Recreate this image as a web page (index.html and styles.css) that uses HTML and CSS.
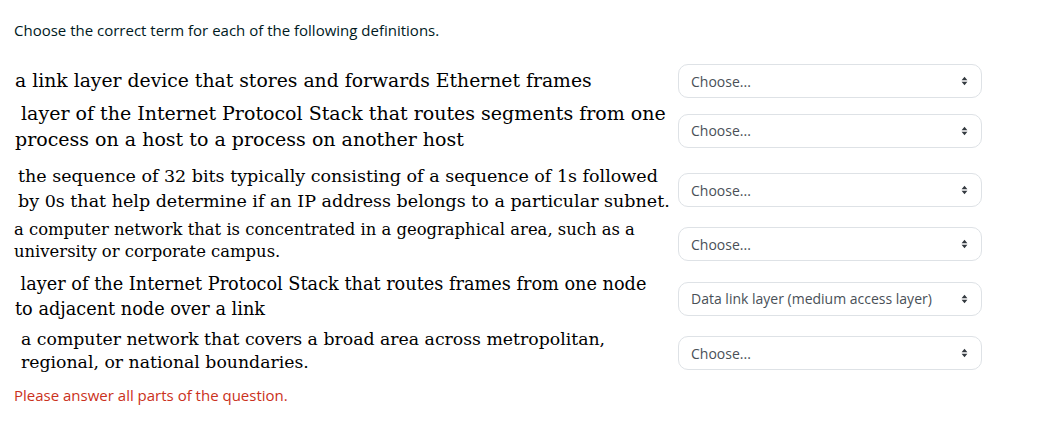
FILE: index.html
```html
<!DOCTYPE html>
<html lang="en">
<head>
    <meta charset="UTF-8">
    <meta name="viewport" content="width=device-width, initial-scale=1.0">
    <title>Match question</title>
    <link rel="stylesheet" href="styles.css">
</head>
<body>

    <div class="que">
        <div class="qtext">Choose the correct term for each of the following definitions.</div>

        <div class="answer">
            <!-- row 1 -->
            <div class="def def-1">a link layer device that stores and forwards Ethernet frames</div>
            <div class="control">
                <select class="choose">
                    <option selected>Choose...</option>
                    <option>Switch</option>
                    <option>Router</option>
                </select>
                <svg class="caret" viewBox="0 0 8 12"><path d="M4 1 L7.5 5 H0.5 Z M4 11 L7.5 7 H0.5 Z"/></svg>
            </div>

            <!-- row 2 -->
            <div class="def def-2">&nbsp;layer of the Internet Protocol Stack that routes segments from one<br>process on a host to a process on another host</div>
            <div class="control">
                <select class="choose">
                    <option selected>Choose...</option>
                    <option>Transport layer</option>
                </select>
                <svg class="caret" viewBox="0 0 8 12"><path d="M4 1 L7.5 5 H0.5 Z M4 11 L7.5 7 H0.5 Z"/></svg>
            </div>

            <!-- row 3 -->
            <div class="def def-3">the sequence of 32 bits typically consisting of a sequence of 1s followed<br>by 0s that help determine if an IP address belongs to a particular subnet.</div>
            <div class="control">
                <select class="choose">
                    <option selected>Choose...</option>
                    <option>Subnet mask</option>
                </select>
                <svg class="caret" viewBox="0 0 8 12"><path d="M4 1 L7.5 5 H0.5 Z M4 11 L7.5 7 H0.5 Z"/></svg>
            </div>

            <!-- row 4 -->
            <div class="def def-4">a computer network that is concentrated in a geographical area, such as a<br>university or corporate campus.</div>
            <div class="control">
                <select class="choose">
                    <option selected>Choose...</option>
                    <option>LAN</option>
                </select>
                <svg class="caret" viewBox="0 0 8 12"><path d="M4 1 L7.5 5 H0.5 Z M4 11 L7.5 7 H0.5 Z"/></svg>
            </div>

            <!-- row 5 -->
            <div class="def def-5">&nbsp;layer of the Internet Protocol Stack that routes frames from one node<br>to adjacent node over a link</div>
            <div class="control">
                <select class="choose">
                    <option>Choose...</option>
                    <option selected>Data link layer (medium access layer)</option>
                </select>
                <svg class="caret" viewBox="0 0 8 12"><path d="M4 1 L7.5 5 H0.5 Z M4 11 L7.5 7 H0.5 Z"/></svg>
            </div>

            <!-- row 6 -->
            <div class="def def-6">a computer network that covers a broad area across metropolitan,<br>regional, or national boundaries.</div>
            <div class="control">
                <select class="choose">
                    <option selected>Choose...</option>
                    <option>WAN</option>
                </select>
                <svg class="caret" viewBox="0 0 8 12"><path d="M4 1 L7.5 5 H0.5 Z M4 11 L7.5 7 H0.5 Z"/></svg>
            </div>
        </div>

        <div class="validation-error">Please answer all parts of the question.</div>
    </div>

</body>
</html>
```

FILE: styles.css
```css
* {
    box-sizing: border-box;
    margin: 0;
    padding: 0;
}

body {
    font-family: "Open Sans", sans-serif;
    background-color: #fff;
    color: #1d2125;
}

.que {
    padding: 20px 14px 0 14px;
}

.qtext {
    font-size: 15px;
    line-height: 20px;
    color: #001a1e;
    margin-bottom: 22px;
}

.answer {
    display: grid;
    grid-template-columns: 664px 304px;
    align-items: center;
}

/* the definitions were pasted in from different places, so sizes differ */
.def {
    font-family: "DejaVu Serif", serif;
    color: #000;
    white-space: nowrap;
}

.def-1 { font-size: 18.8px; line-height: 26px; padding: 6px 0 6px 1px; }
.def-2 { font-size: 19px; line-height: 26px; padding: 0 0 9px 1px; }
.def-3 { font-size: 17.5px; line-height: 25px; padding: 3px 0 5px 4px; }
.def-4 { font-size: 16.4px; line-height: 22px; padding: 0 0 6px 0; }
.def-5 { font-size: 17.7px; line-height: 25px; padding: 3px 0 6px 1px; }
.def-6 { font-size: 17.3px; line-height: 23px; padding: 0 0 4px 7px; }

.control {
    position: relative;
}

.choose {
    appearance: none;
    -webkit-appearance: none;
    width: 304px;
    height: 34px;
    padding: 0 30px 0 12px;
    font-family: "Open Sans", sans-serif;
    font-size: 14px;
    color: #495057;
    background-color: #fff;
    border: 1px solid #dee2e6;
    border-radius: 10px;
}

.caret {
    position: absolute;
    right: 14px;
    top: 12px;
    width: 7px;
    height: 10px;
    fill: #343a40;
    pointer-events: none;
}

.validation-error {
    color: #ca3120;
    font-size: 15px;
    line-height: 20px;
    margin-top: 7px;
}
```
